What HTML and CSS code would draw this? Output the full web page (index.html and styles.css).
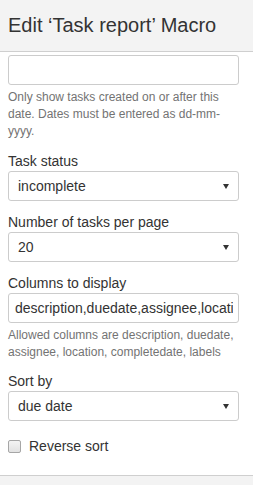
FILE: index.html
```html
<!DOCTYPE html>
<html lang="en">
<head>
    <meta charset="UTF-8">
    <title>Edit Task report Macro</title>
    <link rel="stylesheet" href="styles.css">
</head>
<body>

    <div class="dialog-header">
        <h2>Edit ‘Task report’ Macro</h2>
    </div>

    <div class="dialog-body">
        <!-- created after -->
        <div class="field">
            <input type="text" class="text-input" value="">
            <p class="help">Only show tasks created on or after this date. Dates must be entered as dd-mm-yyyy.</p>
        </div>

        <div class="field">
            <label for="status">Task status</label>
            <div class="select-wrap">
                <select id="status">
                    <option>incomplete</option>
                    <option>complete</option>
                    <option>all</option>
                </select>
            </div>
        </div>

        <div class="field">
            <label for="perPage">Number of tasks per page</label>
            <div class="select-wrap">
                <select id="perPage">
                    <option>20</option>
                    <option>40</option>
                    <option>100</option>
                </select>
            </div>
        </div>

        <div class="field">
            <label for="columns">Columns to display</label>
            <input type="text" id="columns" class="text-input" value="description,duedate,assignee,location,completedate,labels">
            <p class="help">Allowed columns are description, duedate, assignee, location, completedate, labels</p>
        </div>

        <div class="field">
            <label for="sortBy">Sort by</label>
            <div class="select-wrap">
                <select id="sortBy">
                    <option>due date</option>
                    <option>assignee</option>
                    <option>page age</option>
                </select>
            </div>
        </div>

        <div class="check-row">
            <input type="checkbox" id="reverse">
            <label for="reverse">Reverse sort</label>
        </div>
    </div>

    <div class="dialog-footer"></div>

</body>
</html>
```

FILE: styles.css
```css
* {margin: 0; padding: 0; box-sizing: border-box; font-family: 'Liberation Sans', Arial, sans-serif;}

body {
    height: 100vh;
    display: flex;
    flex-direction: column;
    overflow: hidden;
    color: #333;
    background: #fff;
}

.dialog-header {
    height: 52px;
    background: #f3f3f3;
    border-bottom: 1px solid #cfcfcf;
    padding-left: 8px;
}

.dialog-header h2 {
    font-size: 20px;
    font-weight: normal;
    line-height: 51px;
    color: #333;
}

.dialog-body {
    flex: 1;
    padding: 3px 14px 0 8px;
    overflow: hidden;
}

.field {
    margin-bottom: 11px;
}

.field label {
    display: block;
    font-size: 14px;
    line-height: 20px;
}

.text-input,
.select-wrap select {
    display: block;
    width: 100%;
    height: 30px;
    border: 1px solid #ccc;
    border-radius: 3px;
    background: #fff;
    color: #333;
    font-size: 14px;
    outline: none;
}

.text-input {
    padding: 0 5px 0 6px;
}

.select-wrap {
    position: relative;
}

.select-wrap select {
    appearance: none;
    -webkit-appearance: none;
    padding: 0 20px 0 9px;
}

/* small down arrow */
.select-wrap::after {
    content: "";
    position: absolute;
    right: 10px;
    top: 13px;
    border-left: 3px solid transparent;
    border-right: 3px solid transparent;
    border-top: 5px solid #333;
    pointer-events: none;
}

.help {
    margin-top: 4px;
    font-size: 12px;
    line-height: 16.5px;
    color: #737373;
}

.field:first-child .help {
    line-height: 17px;
}

.check-row {
    display: flex;
    align-items: center;
    gap: 8px;
    margin-top: 15px;
}

.check-row input {
    appearance: none;
    -webkit-appearance: none;
    width: 13px;
    height: 13px;
    border: 1px solid #a6a6a6;
    border-radius: 2px;
    background: linear-gradient(#f4f4f4, #e2e2e2);
}

.check-row label {
    font-size: 14px;
    line-height: 20px;
}

.dialog-footer {
    height: 10px;
    background: #f3f3f3;
    border-top: 1px solid #cfcfcf;
}
```
